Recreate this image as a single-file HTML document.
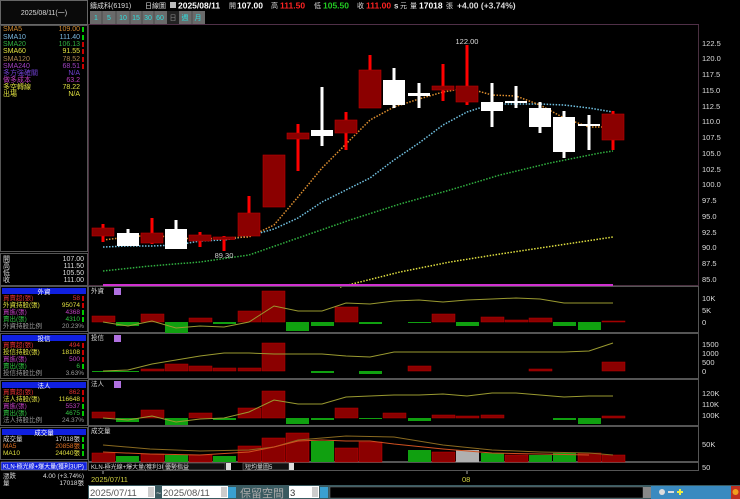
<!DOCTYPE html>
<html><head><meta charset="utf-8"><style>
html,body{margin:0;padding:0;background:#000;width:740px;height:499px;overflow:hidden}
svg{display:block}
text{font-family:"Liberation Sans","Noto Sans CJK TC",sans-serif}
.s{font-size:7px}
</style></head><body>
<svg width="740" height="499" viewBox="0 0 740 499" xmlns="http://www.w3.org/2000/svg">
<rect width="740" height="499" fill="#000"/>
<!-- left panel -->
<rect x="0.5" y="0.5" width="87" height="24" fill="#0a0a0a" stroke="#666"/>
<text x="44" y="15" class="s" fill="#ddd" text-anchor="middle">2025/08/11(一)</text>
<rect x="0.5" y="25.5" width="87" height="226" fill="#000" stroke="#555"/>
<g class="s" font-size="6.5">
<text x="3" y="31" fill="#d08a30">SMA5</text><text x="80" y="31" fill="#d08a30" text-anchor="end">109.00</text>
<text x="3" y="39" fill="#7ab8e0">SMA10</text><text x="80" y="39" fill="#7ab8e0" text-anchor="end">111.40</text>
<text x="3" y="46" fill="#30b040">SMA20</text><text x="80" y="46" fill="#30b040" text-anchor="end">106.13</text>
<text x="3" y="53" fill="#e0e040">SMA60</text><text x="80" y="53" fill="#e0e040" text-anchor="end">91.55</text>
<text x="3" y="61" fill="#b08850">SMA120</text><text x="80" y="61" fill="#b08850" text-anchor="end">78.52</text>
<text x="3" y="68" fill="#a040c0">SMA240</text><text x="80" y="68" fill="#a040c0" text-anchor="end">68.51</text>
<text x="3" y="75" fill="#7040d0">多方強確關</text><text x="80" y="75" fill="#7040d0" text-anchor="end">N/A</text>
<text x="3" y="82" fill="#c040c0">做多成本</text><text x="80" y="82" fill="#c040c0" text-anchor="end">63.2</text>
<text x="3" y="89" fill="#e0e040">多空轉線</text><text x="80" y="89" fill="#e0e040" text-anchor="end">78.22</text>
<text x="3" y="96" fill="#e0e040">出場</text><text x="80" y="96" fill="#e0e040" text-anchor="end">N/A</text>
</g>
<g fill="#0c0" ><rect x="82" y="27" width="2" height="5"/><rect x="82" y="35" width="2" height="5"/></g>
<g fill="#c00"><rect x="82" y="42" width="2" height="5"/><rect x="82" y="49" width="2" height="5"/><rect x="82" y="57" width="2" height="5"/><rect x="82" y="64" width="2" height="5"/></g>
<!-- OHLC -->
<rect x="0.5" y="253.5" width="87" height="32" fill="#000" stroke="#555"/>
<g class="s" font-size="6.5" fill="#ddd">
<text x="3" y="261">開</text><text x="84" y="261" text-anchor="end">107.00</text>
<text x="3" y="268">高</text><text x="84" y="268" text-anchor="end">111.50</text>
<text x="3" y="275">低</text><text x="84" y="275" text-anchor="end">105.50</text>
<text x="3" y="282">收</text><text x="84" y="282" text-anchor="end">111.00</text>
</g>
<!-- sections -->
<g font-size="6.5">
<rect x="0.5" y="286.5" width="87" height="45" fill="#000" stroke="#555"/>
<rect x="2" y="288" width="84" height="6" fill="#1020e0"/><text x="44" y="294" fill="#fff" text-anchor="middle">外資</text>
<text x="3" y="300" fill="#e03030">買賣超(張)</text><text x="80" y="300" fill="#e03030" text-anchor="end">58</text>
<text x="3" y="307" fill="#e0e040">外資持股(張)</text><text x="80" y="307" fill="#e0e040" text-anchor="end">95074</text>
<text x="3" y="314" fill="#c040c0">買進(張)</text><text x="80" y="314" fill="#c040c0" text-anchor="end">4368</text>
<text x="3" y="321" fill="#30c040">賣出(張)</text><text x="80" y="321" fill="#30c040" text-anchor="end">4310</text>
<text x="3" y="328" fill="#999">外資持股比例</text><text x="84" y="328" fill="#999" text-anchor="end">20.23%</text>
<rect x="0.5" y="333.5" width="87" height="45" fill="#000" stroke="#555"/>
<rect x="2" y="335" width="84" height="6" fill="#1020e0"/><text x="44" y="341" fill="#fff" text-anchor="middle">投信</text>
<text x="3" y="347" fill="#e03030">買賣超(張)</text><text x="80" y="347" fill="#e03030" text-anchor="end">494</text>
<text x="3" y="354" fill="#e0e040">投信持股(張)</text><text x="80" y="354" fill="#e0e040" text-anchor="end">18108</text>
<text x="3" y="361" fill="#c040c0">買進(張)</text><text x="80" y="361" fill="#c040c0" text-anchor="end">500</text>
<text x="3" y="368" fill="#30c040">賣出(張)</text><text x="80" y="368" fill="#30c040" text-anchor="end">6</text>
<text x="3" y="375" fill="#999">投信持股比例</text><text x="84" y="375" fill="#999" text-anchor="end">3.63%</text>
<rect x="0.5" y="380.5" width="87" height="45" fill="#000" stroke="#555"/>
<rect x="2" y="382" width="84" height="6" fill="#1020e0"/><text x="44" y="388" fill="#fff" text-anchor="middle">法人</text>
<text x="3" y="394" fill="#e03030">買賣超(張)</text><text x="80" y="394" fill="#e03030" text-anchor="end">862</text>
<text x="3" y="401" fill="#e0e040">法人持股(張)</text><text x="80" y="401" fill="#e0e040" text-anchor="end">116648</text>
<text x="3" y="408" fill="#c040c0">買進(張)</text><text x="80" y="408" fill="#c040c0" text-anchor="end">5537</text>
<text x="3" y="415" fill="#30c040">賣出(張)</text><text x="80" y="415" fill="#30c040" text-anchor="end">4675</text>
<text x="3" y="422" fill="#999">法人持股比例</text><text x="84" y="422" fill="#999" text-anchor="end">24.37%</text>
<rect x="0.5" y="427.5" width="87" height="32" fill="#000" stroke="#555"/>
<rect x="2" y="429" width="84" height="6" fill="#1020e0"/><text x="44" y="435" fill="#fff" text-anchor="middle">成交量</text>
<text x="3" y="441" fill="#ddd">成交量</text><text x="80" y="441" fill="#ddd" text-anchor="end">17018張</text>
<text x="3" y="448" fill="#e07020">MA5</text><text x="80" y="448" fill="#e07020" text-anchor="end">20858張</text>
<text x="3" y="455" fill="#e0e040">MA10</text><text x="80" y="455" fill="#e0e040" text-anchor="end">24040張</text>
<rect x="1" y="462" width="86" height="8" fill="#1020e0" stroke="#aaa" stroke-width="0.6"/>
<text x="3" y="468.5" fill="#fff" font-size="6">KLN-極光線+爆大量(獲利3UP)</text>
<text x="3" y="478" fill="#ddd">漲跌</text><text x="84" y="478" fill="#ddd" text-anchor="end">4.00 (+3.74%)</text>
<text x="3" y="485" fill="#ddd">量</text><text x="84" y="485" fill="#ddd" text-anchor="end">17018張</text>
</g>
<g fill="#c00"><rect x="82" y="296" width="2" height="5"/><rect x="82" y="303" width="2" height="5"/><rect x="82" y="343" width="2" height="5"/><rect x="82" y="350" width="2" height="5"/><rect x="82" y="357" width="2" height="5"/><rect x="82" y="390" width="2" height="5"/><rect x="82" y="397" width="2" height="5"/></g>
<g fill="#0c0"><rect x="82" y="310" width="2" height="5"/><rect x="82" y="317" width="2" height="5"/><rect x="82" y="364" width="2" height="5"/><rect x="82" y="404" width="2" height="5"/><rect x="82" y="411" width="2" height="5"/><rect x="82" y="437" width="2" height="5"/><rect x="82" y="444" width="2" height="5"/><rect x="82" y="451" width="2" height="5"/></g>

<!-- header -->
<g font-size="7" fill="#ddd">
<text x="90" y="8">鑄成科(6191)</text>
<text x="145" y="8">日線圖</text>
<rect x="170" y="2" width="6" height="6" fill="#bbb"/>
<text x="178" y="8.5" font-size="8.5" font-weight="bold" fill="#fff">2025/08/11</text>
<text x="229" y="8">開</text><text x="237" y="8.5" font-size="8.5" font-weight="bold" fill="#fff">107.00</text>
<text x="271" y="8">高</text><text x="280" y="8.5" font-size="8.5" font-weight="bold" fill="#f22">111.50</text>
<text x="314" y="8">低</text><text x="323" y="8.5" font-size="8.5" font-weight="bold" fill="#2c2">105.50</text>
<text x="357" y="8">收</text><text x="366" y="8.5" font-size="8.5" font-weight="bold" fill="#f22">111.00</text>
<text x="394" y="8.5" font-size="8" font-weight="bold">s</text><text x="400" y="8">元</text>
<text x="410" y="8">量</text><text x="419" y="8.5" font-size="8.5" font-weight="bold" fill="#fff">17018</text><text x="446" y="8">張</text>
<text x="457" y="8.5" font-size="8.5" font-weight="bold">+4.00 (+3.74%)</text>
</g>
<g font-size="7" fill="#30e0e0" text-anchor="middle">
<rect x="90" y="11" width="115" height="13" fill="#6a6a6a"/>
<rect x="167" y="11" width="12" height="13" fill="#222"/>
<g stroke="#444" stroke-width="0.8"><line x1="102" y1="11" x2="102" y2="24"/><line x1="116" y1="11" x2="116" y2="24"/><line x1="130" y1="11" x2="130" y2="24"/><line x1="142" y1="11" x2="142" y2="24"/><line x1="154" y1="11" x2="154" y2="24"/><line x1="192" y1="11" x2="192" y2="24"/></g>
<text x="96" y="20">1</text><text x="109" y="20">5</text><text x="123" y="20">10</text><text x="136" y="20">15</text><text x="148" y="20">30</text><text x="160" y="20">60</text><text x="173" y="20" fill="#888">日</text><text x="185" y="20">週</text><text x="198" y="20">月</text>
</g>

<!-- main frame -->
<rect x="88.5" y="24.5" width="610" height="261" fill="none" stroke="#4a3040"/>
<line x1="88" y1="24.5" x2="699" y2="24.5" stroke="#503048"/>
<g font-size="7.5" fill="#ddd">
<text x="702" y="46">122.5</text><text x="702" y="61">120.0</text><text x="702" y="77">117.5</text><text x="702" y="93">115.0</text><text x="702" y="109">112.5</text><text x="702" y="124">110.0</text><text x="702" y="140">107.5</text><text x="702" y="156">105.0</text><text x="702" y="172">102.5</text><text x="702" y="187">100.0</text><text x="702" y="203">97.5</text><text x="702" y="219">95.0</text><text x="702" y="235">92.5</text><text x="702" y="250">90.0</text><text x="702" y="266">87.5</text><text x="702" y="282">85.0</text>
</g>
<!-- MAs -->
<g fill="none" stroke-width="1.5" stroke-dasharray="1.5 1.5">
<polyline stroke="#e0e040" points="340,287 400,272 450,262 500,254 560,245 613,237"/>
<polyline stroke="#30b040" points="103,271 150,266 200,262 249,255 298,238 350,220 400,204 450,190 500,175 550,163 600,153 613,151"/>
<polyline stroke="#70c0e0" points="103,247 128,246 152,246 176,245 200,241 224,240 249,236 274,229 298,218 322,202 346,190 370,178 394,160 419,143 443,125 467,112 492,104 516,104 540,104 564,105 589,108 613,112"/>
<polyline stroke="#e09030" points="103,240 128,237 152,235 176,238 200,239 224,238 249,237 274,225 298,197 322,168 346,144 370,120 394,107 419,99 443,92 467,88 492,95 516,96 540,105 564,118 589,127 613,127"/>
</g>
<rect x="103" y="284" width="510" height="2.5" fill="#d030d0"/>
<!-- candles -->
<g fill="#f00">
<rect x="101.5" y="224" width="3" height="18"/><rect x="150.5" y="218" width="3" height="26"/><rect x="198.5" y="232" width="3" height="15"/><rect x="222.5" y="236" width="3" height="15"/><rect x="247.5" y="196" width="3" height="40"/><rect x="296.5" y="124" width="3" height="47"/><rect x="344.5" y="112" width="3" height="38"/><rect x="368.5" y="55" width="3" height="53"/><rect x="441.5" y="64" width="3" height="37"/><rect x="465.5" y="45" width="3" height="60"/><rect x="611.5" y="111" width="3" height="39"/>
</g>
<g fill="#8b0000" stroke="#c00000" stroke-width="0.6">
<rect x="92" y="228" width="22" height="8"/><rect x="141" y="233" width="22" height="10"/><rect x="189" y="235" width="22" height="6"/><rect x="213" y="237" width="22" height="2.5"/><rect x="238" y="213" width="22" height="23"/><rect x="263" y="155" width="22" height="52"/><rect x="287" y="133" width="22" height="6"/><rect x="335" y="120" width="22" height="13"/><rect x="359" y="70" width="22" height="38"/><rect x="432" y="86" width="22" height="4"/><rect x="456" y="86" width="22" height="16"/><rect x="602" y="114" width="22" height="26"/>
</g>
<g fill="#fff">
<rect x="126.5" y="229" width="3" height="17"/><rect x="174.5" y="220" width="3" height="29"/><rect x="320.5" y="87" width="3" height="59"/><rect x="392.5" y="68" width="3" height="40"/><rect x="417.5" y="83" width="3" height="25"/><rect x="490.5" y="83" width="3" height="44"/><rect x="514.5" y="86" width="3" height="22"/><rect x="538.5" y="102" width="3" height="31"/><rect x="562.5" y="111" width="3" height="47"/><rect x="587.5" y="115" width="3" height="35"/>
<rect x="117" y="233" width="22" height="13"/><rect x="165" y="229" width="22" height="20"/><rect x="311" y="130" width="22" height="6"/><rect x="383" y="80" width="22" height="25"/><rect x="408" y="93" width="22" height="3"/><rect x="481" y="102" width="22" height="9"/><rect x="505" y="101" width="22" height="2"/><rect x="529" y="108" width="22" height="19"/><rect x="553" y="117" width="22" height="35"/><rect x="578" y="124" width="22" height="2"/>
</g>
<text x="467" y="44" font-size="7.5" fill="#ddd" text-anchor="middle">122.00</text>
<text x="224" y="258" font-size="7.5" fill="#ccc" text-anchor="middle">89.30</text>

<!-- indicator panels -->
<g fill="none" stroke="#555"><rect x="88.5" y="286.5" width="610" height="46"/><rect x="88.5" y="333.5" width="610" height="45"/><rect x="88.5" y="379.5" width="610" height="46"/><rect x="88.5" y="426.5" width="610" height="35"/><rect x="88.5" y="462.5" width="610" height="8"/></g>
<g font-size="6.5" fill="#ddd"><text x="91" y="293">外資</text><text x="91" y="340">投信</text><text x="91" y="386">法人</text><text x="91" y="433">成交量</text></g>
<g fill="#b070e0"><rect x="114" y="288" width="7" height="7"/><rect x="114" y="335" width="7" height="7"/><rect x="114" y="381" width="7" height="7"/></g>
<g font-size="7.5" fill="#ddd"><text x="702" y="301">10K</text><text x="702" y="313">5K</text><text x="702" y="325">0</text><text x="702" y="347">1500</text><text x="702" y="356">1000</text><text x="702" y="365">500</text><text x="702" y="374">0</text><text x="702" y="396">120K</text><text x="702" y="407">110K</text><text x="702" y="418">100K</text><text x="702" y="447">50K</text><text x="702" y="470">50</text></g>
<!-- 外資 -->
<g fill="#8b0000" stroke="#b00" stroke-width="0.5">
<rect x="92" y="316" width="23" height="6"/><rect x="141" y="314" width="23" height="8"/><rect x="189" y="318" width="23" height="4"/><rect x="238" y="311" width="23" height="11"/><rect x="262" y="291" width="23" height="31"/><rect x="335" y="307" width="23" height="15"/><rect x="432" y="314" width="23" height="8"/><rect x="481" y="317" width="23" height="5"/><rect x="505" y="320" width="23" height="2"/><rect x="529" y="318" width="23" height="4"/><rect x="602" y="321" width="23" height="1"/>
</g>
<g fill="#10a010">
<rect x="116" y="322" width="23" height="4"/><rect x="165" y="322" width="23" height="11"/><rect x="213" y="322" width="23" height="2"/><rect x="286" y="322" width="23" height="9"/><rect x="311" y="322" width="23" height="4"/><rect x="359" y="322" width="23" height="2"/><rect x="408" y="322" width="23" height="1"/><rect x="456" y="322" width="23" height="4"/><rect x="553" y="322" width="23" height="4"/><rect x="578" y="322" width="23" height="8"/>
</g>
<polyline fill="none" stroke="#9a9a30" stroke-width="1" points="103,322 128,326 152,321 176,328 200,326 224,327 249,322 274,306 298,311 322,311 346,303 370,304 394,301 419,300 443,302 467,300 492,299 516,298 540,299 564,303 589,303 613,303"/>
<!-- 投信 -->
<g fill="#8b0000" stroke="#b00" stroke-width="0.5">
<rect x="141" y="369" width="23" height="2"/><rect x="165" y="364" width="23" height="7"/><rect x="189" y="366" width="23" height="5"/><rect x="213" y="368" width="23" height="3"/><rect x="238" y="368" width="23" height="3"/><rect x="262" y="343" width="23" height="28"/><rect x="408" y="366" width="23" height="5"/><rect x="529" y="369" width="23" height="2"/><rect x="602" y="362" width="23" height="9"/>
</g>
<g fill="#10a010"><rect x="92" y="371" width="47" height="1"/><rect x="311" y="371" width="23" height="2"/><rect x="359" y="371" width="23" height="3"/></g>
<polyline fill="none" stroke="#9a9a30" stroke-width="1" points="103,371 128,370 152,364 176,360 200,356 224,353 249,353 274,354 298,354 322,354 346,356 370,357 394,352 419,352 443,352 467,352 492,352 516,352 540,352 564,352 589,351 613,343"/>
<!-- 法人 -->
<g fill="#8b0000" stroke="#b00" stroke-width="0.5">
<rect x="92" y="412" width="23" height="6"/><rect x="141" y="410" width="23" height="8"/><rect x="189" y="413" width="23" height="5"/><rect x="238" y="408" width="23" height="10"/><rect x="262" y="391" width="23" height="27"/><rect x="335" y="408" width="23" height="10"/><rect x="383" y="413" width="23" height="5"/><rect x="432" y="415" width="23" height="3"/><rect x="456" y="416" width="23" height="2"/><rect x="481" y="415" width="23" height="3"/><rect x="602" y="416" width="23" height="2"/>
</g>
<g fill="#10a010">
<rect x="116" y="418" width="23" height="4"/><rect x="165" y="418" width="23" height="7"/><rect x="213" y="418" width="23" height="2"/><rect x="286" y="418" width="23" height="6"/><rect x="311" y="418" width="23" height="2"/><rect x="359" y="418" width="23" height="1"/><rect x="408" y="418" width="23" height="3"/><rect x="553" y="418" width="23" height="2"/><rect x="578" y="418" width="23" height="6"/>
</g>
<polyline fill="none" stroke="#9a9a30" stroke-width="1" points="103,418 128,420 152,416 176,422 200,419 224,418 249,412 274,400 298,404 322,404 346,397 370,396 394,395 419,395 443,394 467,396 492,393 516,393 540,395 564,397 589,396 613,396"/>
<!-- volume -->
<g fill="#8b0000" stroke="#c00" stroke-width="0.5">
<rect x="92" y="453" width="23" height="9"/><rect x="141" y="454" width="23" height="8"/><rect x="189" y="455" width="23" height="7"/><rect x="238" y="446" width="23" height="16"/><rect x="262" y="438" width="23" height="24"/><rect x="286" y="433" width="23" height="29"/><rect x="335" y="448" width="23" height="14"/><rect x="359" y="442" width="23" height="20"/><rect x="432" y="452" width="23" height="10"/><rect x="505" y="455" width="23" height="7"/><rect x="578" y="453" width="23" height="9"/><rect x="602" y="455" width="23" height="7"/>
</g>
<g fill="#10a010"><rect x="116" y="456" width="23" height="6"/><rect x="165" y="455" width="23" height="7"/><rect x="213" y="456" width="23" height="6"/><rect x="311" y="441" width="23" height="21"/><rect x="408" y="450" width="23" height="12"/><rect x="481" y="453" width="23" height="9"/><rect x="529" y="455" width="23" height="7"/><rect x="553" y="453" width="23" height="9"/></g>
<rect x="456" y="450" width="23" height="12" fill="#b0b0b0"/>
<polyline fill="none" stroke="#8a6a20" stroke-width="1" points="103,445 150,449 200,451 249,450 274,447 298,440 346,436 394,437 443,445 492,450 540,452 589,453 613,455"/>
<polyline fill="none" stroke="#d05020" stroke-width="1" points="103,452 150,454 200,455 249,452 274,447 298,441 322,440 346,441 370,441 394,444 443,449 492,453 540,454 589,455"/>
<!-- KLN bar -->
<g font-size="6" fill="#ddd"><text x="91" y="469">KLN-極光線+爆大量(獲利3UP)</text>
<rect x="163" y="463" width="62" height="7" fill="#111" stroke="#888" stroke-width="0.5"/><text x="165" y="469">優勢指益</text>
<rect x="226" y="463" width="5" height="7" fill="#ddd"/>
<rect x="243" y="463" width="46" height="7" fill="#111" stroke="#888" stroke-width="0.5"/><text x="245" y="469">短均量圖5</text>
<rect x="289" y="463" width="5" height="7" fill="#ddd"/></g>
<line x1="103" y1="471" x2="103" y2="474" stroke="#aaa"/><line x1="467" y1="471" x2="467" y2="474" stroke="#aaa"/>
<text x="91" y="482" font-size="7.5" fill="#d0d040">2025/07/11</text>
<text x="462" y="482" font-size="7.5" fill="#d0d040">08</text>
<!-- bottom controls -->
<rect x="88" y="485" width="652" height="14" fill="#3a5a60"/>
<rect x="0" y="486" width="88" height="13" fill="#000"/>
<rect x="89" y="486" width="66" height="12" fill="#fff"/><text x="90" y="496" font-size="9.5" fill="#555">2025/07/11</text>
<rect x="148" y="487" width="6" height="10" fill="#ccc"/>
<text x="156" y="496" font-size="9" fill="#ddd">~</text>
<rect x="162" y="486" width="66" height="12" fill="#fff"/><text x="163" y="496" font-size="9.5" fill="#555">2025/08/11</text>
<rect x="221" y="487" width="6" height="10" fill="#ccc"/>
<rect x="228" y="487" width="8" height="11" fill="#3aa0d0"/>
<text x="240" y="497" font-size="11" fill="#aaa">保留空間</text>
<rect x="289" y="486" width="30" height="12" fill="#fff"/><text x="290" y="496" font-size="9.5" fill="#333">3</text>
<rect x="312" y="487" width="6" height="10" fill="#ccc"/>
<rect x="320" y="487" width="8" height="11" fill="#3aa0d0"/>
<rect x="330" y="487" width="313" height="11" fill="#000" stroke="#777" stroke-width="0.5"/>
<rect x="643" y="487" width="8" height="11" fill="#888"/>
<rect x="651" y="486" width="80" height="13" fill="#3a8ac0"/>
<g fill="#ddd"><circle cx="662" cy="492" r="3"/><rect x="668" y="491" width="6" height="2"/><rect x="677" y="491" width="6" height="2" fill="#ee4"/><rect x="679" y="489" width="2" height="6" fill="#ee4"/></g>
<rect x="731" y="486" width="9" height="13" fill="#c03020"/><circle cx="735.5" cy="492" r="3" fill="#f0a020"/>
</svg>
</body></html>
